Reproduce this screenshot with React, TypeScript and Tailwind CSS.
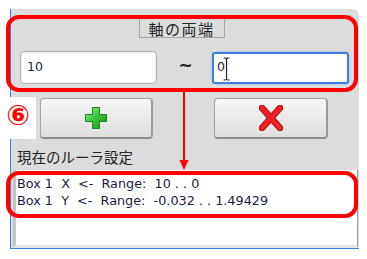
import React from 'react';

const PlusIcon = () => (
  <svg width="24" height="24" viewBox="0 0 24 24">
    <defs>
      <linearGradient id="pg" x1="0" y1="0" x2="1" y2="1">
        <stop offset="0" stopColor="#9af09a" />
        <stop offset="0.45" stopColor="#3cc83c" />
        <stop offset="1" stopColor="#14901a" />
      </linearGradient>
    </defs>
    <polygon
      points="8.5,1.5 15.5,1.5 15.5,8.5 22.5,8.5 22.5,15.5 15.5,15.5 15.5,22.5 8.5,22.5 8.5,15.5 1.5,15.5 1.5,8.5 8.5,8.5"
      fill="url(#pg)"
      stroke="#168a16"
      strokeWidth="1"
    />
  </svg>
);

const CrossIcon = () => (
  <svg width="24" height="26" viewBox="0 0 24 26">
    <g strokeLinecap="round">
      <line x1="3" y1="3" x2="21" y2="23" stroke="#b80c0c" strokeWidth="6.5" />
      <line x1="21" y1="3" x2="3" y2="23" stroke="#b80c0c" strokeWidth="6.5" />
      <line x1="3" y1="3" x2="21" y2="23" stroke="#ee2222" strokeWidth="4.5" />
      <line x1="21" y1="3" x2="3" y2="23" stroke="#ee2222" strokeWidth="4.5" />
    </g>
  </svg>
);

const IBeam = () => (
  <svg width="7" height="24" viewBox="0 0 7 24" className="absolute left-[9px] top-[3px]">
    <path d="M0.5 1 H2.5 L3.5 2 L4.5 1 H6.5 M3.5 2 V22 M0.5 23 H2.5 L3.5 22 L4.5 23 H6.5" stroke="#222" strokeWidth="1.2" fill="none" />
  </svg>
);

export default function App() {
  const btn =
    'w-[113px] h-[41px] rounded-[4px] border border-[#a2a2a2] border-b-2 border-r-2 border-b-[#8c8c8c] border-r-[#9a9a9a] bg-gradient-to-b from-[#f6f6f6] to-[#dedede] flex items-center justify-center';

  return (
    <div className="relative w-[367px] h-[259px] bg-white overflow-hidden font-['DejaVu_Sans','Noto_Sans_CJK_JP',sans-serif]">
      {/* panel */}
      <div className="ml-[10px] mt-[9px] w-[349px] h-[240px] bg-[#dcdcdc] border-l border-b border-[#3584dc] rounded-tr-[6px] flex flex-col">
        {/* group: 軸の両端 */}
        <div className="-ml-[5px] mt-[6px] w-[352px] h-[77px] border-4 border-[#ff0000] rounded-[13px] flex flex-col">
          <div className="self-center -ml-[1px] w-[86px] h-[19px] border border-t-0 border-[#a6a6a6] flex items-center justify-center text-[15px] tracking-[1.5px] text-[#222] font-['Noto_Sans_CJK_JP',sans-serif] leading-none pt-[1px]">
            軸の両端
          </div>
          <div className="mt-[13px] flex items-center">
            <div className="ml-[10px] w-[137px] h-[33px] rounded-[4px] border border-[#b4b4b4] bg-white shadow-[inset_0_0_0_1px_#ececec] flex items-center pl-[6px] text-[12.5px] text-[#1c1c44]">
              10
            </div>
            <div className="flex-1 text-center text-[17px] font-bold text-[#222] pl-[2px] -mt-[3px]">~</div>
            <div className="relative mr-[5px] w-[137px] h-[32px] rounded-[3px] border-2 border-[#3d7fe0] bg-white shadow-[0_0_2px_#8fb8f0] flex items-center pl-[3px] text-[12.5px] text-[#1c1c44]">
              0
              <IBeam />
            </div>
          </div>
        </div>

        {/* buttons */}
        <div className="mt-[6px] flex items-center">
          <div className={`ml-[29px] ${btn}`}>
            <PlusIcon />
          </div>
          <div className={`ml-[61px] ${btn} w-[114px]`}>
            <CrossIcon />
          </div>
        </div>

        {/* label */}
        <div className="mt-[8px] pl-[6px] h-[20px] flex items-center text-[14.5px] text-[#222] font-['Noto_Sans_CJK_JP',sans-serif] leading-none">
          現在のルーラ設定
        </div>

        {/* output area */}
        <div className="mt-[3px] ml-[2px] w-[345px] flex-1 bg-white border-l-[3px] border-b-[3px] border-r border-[#c4c4c4] border-r-[#9a9a9a] border-b-[#e6e6e6]">
          <div className="-ml-[10px] mt-[1px] w-[352px] h-[47px] border-4 border-[#ff0000] rounded-[13px] pl-[7px] text-[12.8px] leading-[17px] text-[#1c1c3c] whitespace-pre">
            <div>Box 1  X  &lt;-  Range:  10 . . 0</div>
            <div>Box 1  Y  &lt;-  Range:  -0.032 . . 1.49429</div>
          </div>
        </div>
      </div>

      {/* callout ⑥ */}
      <div className="absolute left-0 top-[97px] w-[36px] h-[42px] bg-white flex items-center justify-center pb-[4px] text-[28px] font-bold text-[#ff0000] leading-none font-['DejaVu_Sans',sans-serif]">
        ⑥
      </div>

      {/* connector arrow */}
      <svg className="absolute left-[178px] top-[90px]" width="12" height="82" viewBox="0 0 12 82">
        <line x1="6" y1="0" x2="6" y2="72" stroke="#ff0000" strokeWidth="2" />
        <polygon points="1.5,70 10.5,70 6,80" fill="#ff0000" />
      </svg>
    </div>
  );
}
